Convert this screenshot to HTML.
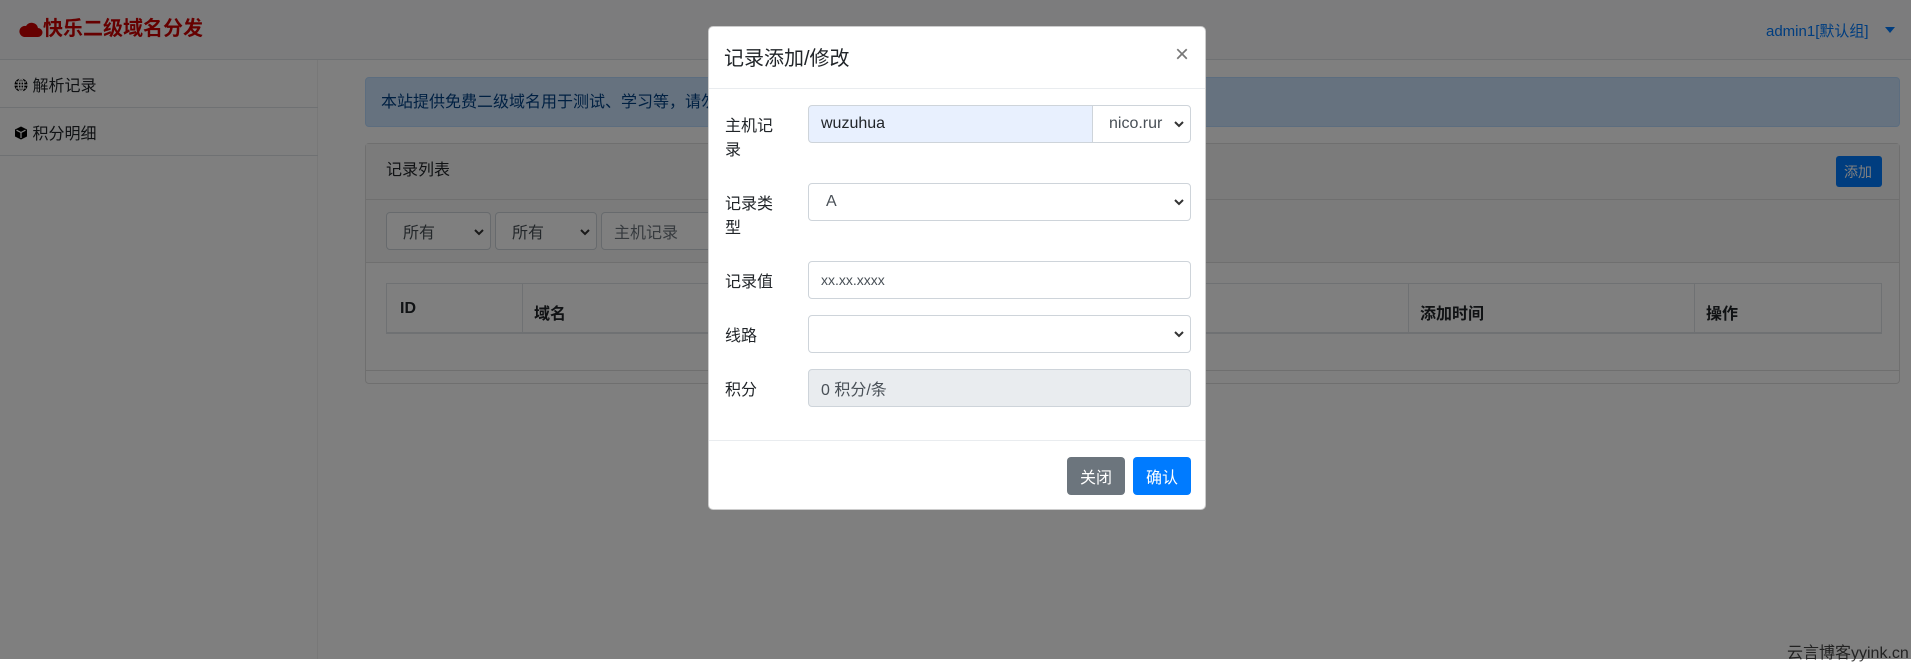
<!DOCTYPE html>
<html><head><meta charset="utf-8"><style>
*{box-sizing:border-box;margin:0;padding:0}
body{width:1911px;height:659px;overflow:hidden;position:relative;background:#fff;font-family:"Liberation Sans","Noto Sans CJK SC",sans-serif;font-size:16px;color:#212529}
.a{position:absolute}
.nav{left:0;top:0;width:1911px;height:60px;background:#f8f9fa;border-bottom:1px solid #dee2e6}
.side{left:0;top:60px;width:318px;height:599px;background:#fff;border-right:1px solid #f0f0f0}
.si{left:0;width:318px;height:48px;border-bottom:1px solid #dee2e6;padding:12px 0 0 14px;font-size:16px}
.sel{border:1px solid #ced4da;border-radius:4px;background:#fff;height:38px;font-size:16px;padding:0 12px;color:#495057;display:flex;align-items:center}
.ov{left:0;top:0;width:1911px;height:659px;background:rgba(0,0,0,.5)}
.modal{left:708px;top:26px;width:498px;height:484px;background:#fff;border-radius:5px;border:1px solid rgba(0,0,0,.2)}
.lbl{left:16px;font-size:16px;line-height:24px;width:60px}
.inp{left:99px;width:383px;height:38px;border:1px solid #ced4da;border-radius:4px;background:#fff;font-size:16px;padding:0 12px;color:#495057;display:flex;align-items:center}
.chev{position:absolute;right:6px;top:14px}
.btn{height:38px;border-radius:4px;color:#fff;display:flex;align-items:center;justify-content:center;width:58px;top:430px}
</style></head><body>
<div class="a nav"></div>
<div class="a" style="left:19px;top:16px;color:#c00;font-weight:bold;font-size:20px;line-height:26px">
<svg width="24" height="20" viewBox="0 0 24 20" style="vertical-align:-3px"><path d="M5 19h14a4.5 4.5 0 0 0 0-9 6.5 6.5 0 0 0-12-2 5.5 5.5 0 0 0-2 11z" fill="#c00"/></svg>快乐二级域名分发</div>
<div class="a" style="left:1766px;top:20px;color:#007bff;font-size:15px">admin1[默认组]</div>
<div class="a" style="left:1885px;top:27px;width:0;height:0;border-left:5px solid transparent;border-right:5px solid transparent;border-top:6px solid #007bff"></div>
<div class="a side"></div>
<div class="a si" style="top:60px"><svg width="14" height="14" viewBox="0 0 14 14" style="vertical-align:-1px"><circle cx="7" cy="7" r="6.5" fill="#000"/><path d="M0.5 7h13M7 0.5v13M2 4h10M2 10h10" stroke="#fff" stroke-width="1.2"/><ellipse cx="7" cy="7" rx="2.8" ry="6.5" stroke="#fff" stroke-width="1.2" fill="none"/></svg> 解析记录</div>
<div class="a si" style="top:108px"><svg width="14" height="14" viewBox="0 0 14 14" style="vertical-align:-1px"><path d="M7 0.5l6 3v7l-6 3-6-3v-7z" fill="#000"/><path d="M2.5 4.2L7 6.5l4.5-2.3M7 6.5v5.5" stroke="#fff" stroke-width="1.2" fill="none"/></svg> 积分明细</div>
<div class="a" style="left:365px;top:77px;width:1535px;height:50px;background:#cce5ff;border:1px solid #b8daff;border-radius:4px;color:#004085;padding:10px 15px;font-size:16px">本站提供免费二级域名用于测试、学习等，请勿用于违法用途</div>
<div class="a" style="left:365px;top:143px;width:1535px;height:241px;border:1px solid #dfdfdf;border-radius:4px;background:#fff"></div>
<div class="a" style="left:366px;top:144px;width:1533px;height:56px;background:#f7f7f7;border-bottom:1px solid #dfdfdf;padding:12px 20px">记录列表</div>
<div class="a" style="left:1836px;top:156px;width:46px;height:31px;background:#007bff;border-radius:3px;color:#fff;font-size:14px;padding:6px 8px">添加</div>
<div class="a" style="left:366px;top:200px;width:1533px;height:63px;background:#f7f7f7;border-bottom:1px solid #dfdfdf"></div>
<div class="a sel" style="left:386px;top:212px;width:105px;padding-left:16px">所有<svg class="chev" style="top:15px" width="10" height="8" viewBox="0 0 10 8"><path d="M1 2l4 4 4-4" stroke="#333" stroke-width="2" fill="none"/></svg></div>
<div class="a sel" style="left:495px;top:212px;width:102px;padding-left:16px">所有<svg class="chev" style="top:15px" width="10" height="8" viewBox="0 0 10 8"><path d="M1 2l4 4 4-4" stroke="#333" stroke-width="2" fill="none"/></svg></div>
<div class="a sel" style="left:601px;top:212px;width:130px;color:#6c757d">主机记录</div>
<div class="a" style="left:386px;top:283px;width:1496px;height:51px;border:1px solid #dee2e6;border-bottom:2px solid #dee2e6;font-weight:bold"></div>
<div class="a" style="left:400px;top:300px;font-weight:bold">ID</div>
<div class="a" style="left:522px;top:284px;height:48px;border-left:1px solid #dee2e6"></div>
<div class="a" style="left:534px;top:300px;font-weight:bold">域名</div>
<div class="a" style="left:1408px;top:284px;height:48px;border-left:1px solid #dee2e6"></div>
<div class="a" style="left:1420px;top:300px;font-weight:bold">添加时间</div>
<div class="a" style="left:1694px;top:284px;height:48px;border-left:1px solid #dee2e6"></div>
<div class="a" style="left:1706px;top:300px;font-weight:bold">操作</div>
<div class="a" style="left:366px;top:370px;width:1533px;border-top:1px solid #dfdfdf"></div>
<div class="a" style="left:1787px;top:639px;font-size:16px;color:#444">云言博客yyink.cn</div>
<div class="a ov"></div>
<div class="a modal">
<div class="a" style="left:15px;top:18px;font-size:20px;line-height:28px">记录添加/修改</div>
<div class="a" style="left:466px;top:14px;font-size:24px;color:#777">×</div>
<div class="a" style="left:0;top:61px;width:496px;border-top:1px solid #e9ecef"></div>
<div class="a lbl" style="top:88px">主机记<br>录</div>
<div class="a inp" style="top:78px;width:285px;background:#e8f0fe;border-radius:4px 0 0 4px;color:#212529">wuzuhua</div>
<div class="a inp" style="left:383px;top:78px;width:99px;border-radius:0 4px 4px 0;padding-left:16px">nico.rur<svg class="chev" width="10" height="8" viewBox="0 0 10 8"><path d="M1 2l4 4 4-4" stroke="#333" stroke-width="2" fill="none"/></svg></div>
<div class="a lbl" style="top:166px">记录类<br>型</div>
<div class="a inp" style="top:156px;padding-left:17px">A<svg class="chev" width="10" height="8" viewBox="0 0 10 8"><path d="M1 2l4 4 4-4" stroke="#333" stroke-width="2" fill="none"/></svg></div>
<div class="a lbl" style="top:244px">记录值</div>
<div class="a inp" style="top:234px;font-size:14px">xx.xx.xxxx</div>
<div class="a lbl" style="top:298px">线路</div>
<div class="a inp" style="top:288px"><svg class="chev" width="10" height="8" viewBox="0 0 10 8"><path d="M1 2l4 4 4-4" stroke="#333" stroke-width="2" fill="none"/></svg></div>
<div class="a lbl" style="top:352px">积分</div>
<div class="a inp" style="top:342px;background:#e9ecef">0 积分/条</div>
<div class="a" style="left:0;top:413px;width:496px;border-top:1px solid #e9ecef"></div>
<div class="a btn" style="left:358px;background:#6c757d">关闭</div>
<div class="a btn" style="left:424px;background:#007bff">确认</div>
</div>
</body></html>
